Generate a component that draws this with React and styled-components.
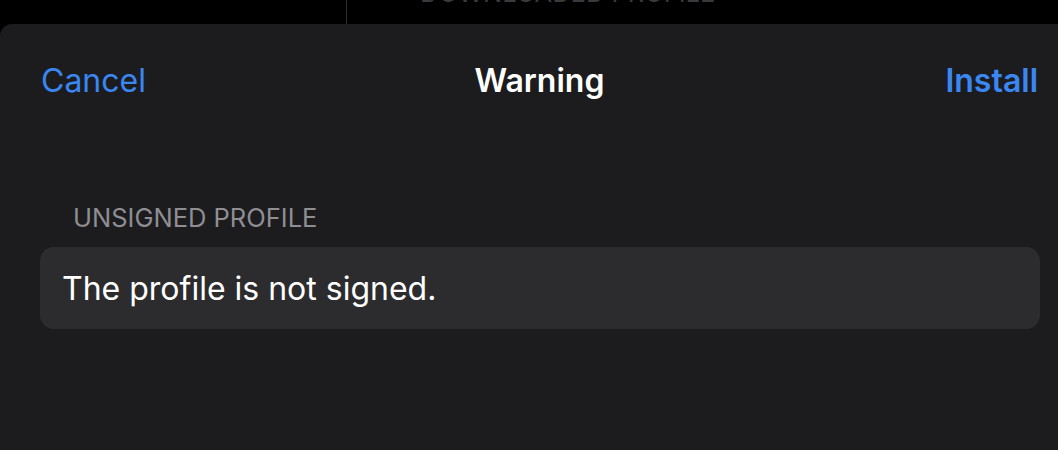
import React from 'react'
import styled, { createGlobalStyle } from 'styled-components'

const GlobalStyle = createGlobalStyle`
  html, body {
    margin: 0;
    background: #000;
    overflow: hidden;
  }
  body {
    font-family: Inter, "Liberation Sans", sans-serif;
    -webkit-font-smoothing: antialiased;
  }
`

const Screen = styled.div`
  width: 1058px;
  height: 450px;
  overflow: hidden;
  background: #000;
`

const Behind = styled.div`
  display: flex;
  height: 24px;
  overflow: hidden;
`

const Sidebar = styled.div`
  width: 346px;
  border-right: 1px solid #2c2c2e;
`

const BehindLabel = styled.div`
  margin: -22px 0 0 73px;
  font-size: 25.5px;
  line-height: 30px;
  color: #3a3a3c;
  text-transform: uppercase;
  white-space: nowrap;
`

const Sheet = styled.div`
  width: 1081px;
  height: 426px;
  background: #1c1c1e;
  border-radius: 12px 12px 0 0;
`

const NavBar = styled.div`
  display: grid;
  grid-template-columns: 1fr auto 1fr;
  align-items: center;
  height: 112px;
  padding: 0 43px 0 41px;
`

const NavButton = styled.button`
  justify-self: ${({ align }) => (align === 'right' ? 'end' : 'start')};
  padding: 0;
  border: 0;
  background: none;
  font-family: inherit;
  font-size: 32px;
  font-weight: ${({ bold }) => (bold ? 600 : 400)};
  color: #3a87f2;
`

const Title = styled.h1`
  margin: 0;
  font-size: 32px;
  font-weight: 600;
  color: #fff;
`

const Section = styled.section`
  padding: 67px 41px 0 40px;
`

const SectionHeader = styled.h2`
  margin: 0 0 14px 33px;
  font-size: 25.5px;
  font-weight: 400;
  line-height: 30px;
  color: #8e8e93;
  text-transform: uppercase;
`

const Card = styled.div`
  display: flex;
  align-items: center;
  height: 82px;
  padding: 0 22px;
  border-radius: 14px;
  background: #2c2c2e;
`

const CardText = styled.p`
  margin: 0;
  font-size: 32px;
  color: #fff;
`

const App = () => (
  <>
    <GlobalStyle />
    <Screen>
      <Behind>
        <Sidebar />
        <BehindLabel>Downloaded Profile</BehindLabel>
      </Behind>
      <Sheet>
        <NavBar>
          <NavButton>Cancel</NavButton>
          <Title>Warning</Title>
          <NavButton align="right" bold>
            Install
          </NavButton>
        </NavBar>
        <Section>
          <SectionHeader>Unsigned Profile</SectionHeader>
          <Card>
            <CardText>The profile is not signed.</CardText>
          </Card>
        </Section>
      </Sheet>
    </Screen>
  </>
)

export default App
